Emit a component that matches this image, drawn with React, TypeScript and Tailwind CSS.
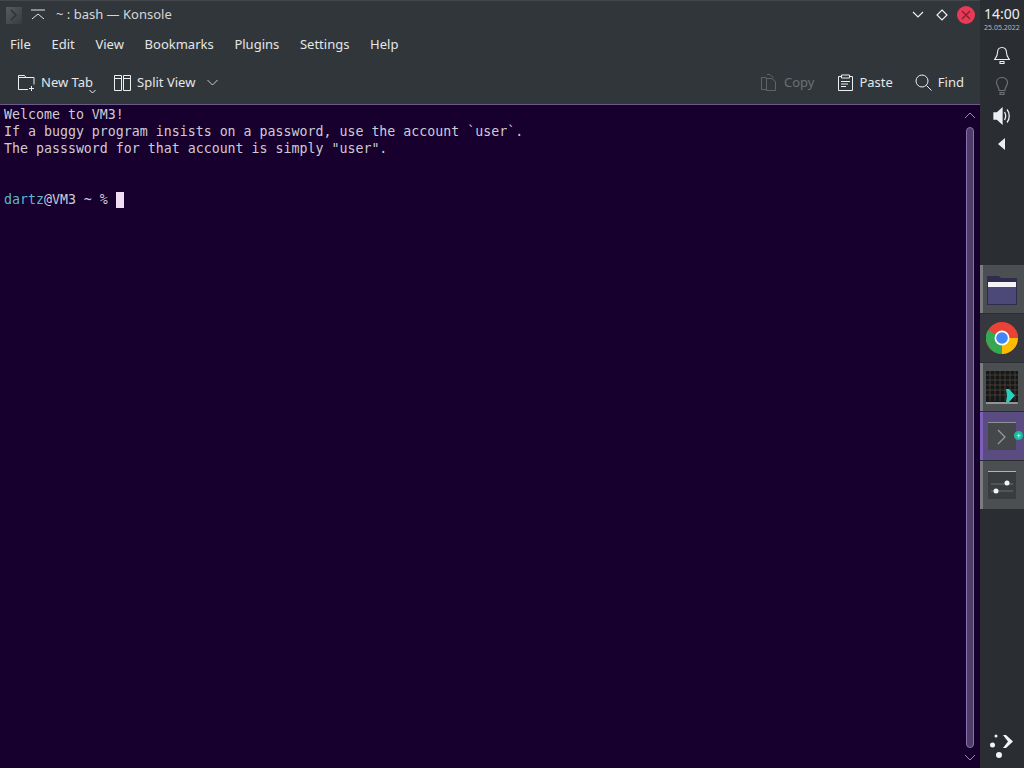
import React from "react";

const MENU = ["File", "Edit", "View", "Bookmarks", "Plugins", "Settings", "Help"];

const TERMINAL_LINES = [
  "Welcome to VM3!",
  "If a buggy program insists on a password, use the account `user`.",
  'The passsword for that account is simply "user".',
  "",
  "",
];

const TitleBar = () => (
  <div className="flex h-[29px] items-center border-t border-[#43474b] bg-[#31363b] text-[#d5d8da]">
    <div className="ml-[6px] flex h-[17px] w-[16px] items-center justify-center bg-gradient-to-br from-[#585b5e] to-[#383c40]">
      <svg width="10" height="12" viewBox="0 0 10 12" fill="none" stroke="#2f3235" strokeWidth="1.500">
        <path d="M2 1l5 5-5 5" />
      </svg>
    </div>
    <svg className="ml-[9px]" width="14" height="12" viewBox="0 0 14 12" fill="none" stroke="#e4e6e7" strokeWidth="1">
      <path d="M0 1h14M1 10l6-5 6 5" />
    </svg>
    <span className="ml-[11px] text-[13px]">~ : bash — Konsole</span>
    <div className="ml-auto flex items-center">
      <svg width="12" height="8" viewBox="0 0 12 8" fill="none" stroke="#eceff1" strokeWidth="1.200">
        <path d="M1 1l5 5 5-5" />
      </svg>
      <svg className="ml-[12px]" width="12" height="12" viewBox="0 0 12 12" fill="none" stroke="#eceff1" strokeWidth="1.200">
        <path d="M6 1l5 5-5 5-5-5z" />
      </svg>
      <div className="ml-[9px] mr-[5px] flex h-[18px] w-[18px] items-center justify-center rounded-full bg-[#e93a55]">
        <svg width="10" height="10" viewBox="0 0 10 10" fill="none" stroke="#7d1f30" strokeWidth="1.200">
          <path d="M1 1l8 8M9 1l-8 8" />
        </svg>
      </div>
    </div>
  </div>
);

const MenuBar = () => (
  <div className="flex h-[32px] items-center gap-[20.7px] bg-[#31363b] pl-[10px] text-[13px] text-[#e4e6e7]">
    {MENU.map((item) => (
      <span key={item}>{item}</span>
    ))}
  </div>
);

const ToolBar = () => (
  <div className="flex h-[43px] items-center bg-[#31363b] pl-[18px] pr-[16px] text-[13px] text-[#e4e6e7]">
    <svg width="17" height="17" viewBox="0 0 17 17" fill="none" stroke="#eceff1" strokeWidth="1">
      <path d="M10 15.500H.5V1.500h6l1.500 2h8v7M.5 3.500H8M13.500 12v5M11 14.500h5" />
    </svg>
    <span className="ml-[6px]">New Tab</span>
    <svg className="mt-[18px] ml-[-4px]" width="7" height="5" viewBox="0 0 7 5" fill="none" stroke="#eceff1" strokeWidth="1">
      <path d="M.5 1l3 3 3-3" />
    </svg>
    <svg className="ml-[18px]" width="17" height="16" viewBox="0 0 17 16" fill="none" stroke="#eceff1" strokeWidth="1">
      <path d="M.5.500h7v15h-7zM9.500.500h7v15h-7zM.5 3.500h7M9.500 3.500h7" />
    </svg>
    <span className="ml-[6px]">Split View</span>
    <svg className="ml-[12px]" width="11" height="7" viewBox="0 0 11 7" fill="none" stroke="#c8cbcd" strokeWidth="1">
      <path d="M.5 1l5 5 5-5" />
    </svg>
    <svg className="ml-auto" width="16" height="17" viewBox="0 0 16 17" fill="none" stroke="#5f6468" strokeWidth="1">
      <path d="M6 .5h3l3 3v1M.5 3.500H5v1M.5 3.500v12H5M5.500 4.500h5l4 3v9h-9z" />
    </svg>
    <span className="ml-[7px] text-[#6c7074]">Copy</span>
    <svg className="ml-[24px]" width="15" height="17" viewBox="0 0 15 17" fill="none" stroke="#eceff1" strokeWidth="1">
      <path d="M3.500 2.500H.5v14h14v-14h-3M3.500 1h8v3h-8zM3 7.500h9M3 10h7M3 12.500h5" />
    </svg>
    <span className="ml-[6px]">Paste</span>
    <svg className="ml-[22px]" width="17" height="17" viewBox="0 0 17 17" fill="none" stroke="#eceff1" strokeWidth="1">
      <circle cx="7" cy="7" r="6" />
      <path d="M11.500 11.500l5 5" />
    </svg>
    <span className="ml-[6px]">Find</span>
  </div>
);

const Terminal = () => (
  <div className="flex min-h-0 flex-1 border-t border-[#6d5a8c] bg-[#17002e]">
    <div className="flex-1 pl-[4px] pt-[1px] font-['DejaVu_Sans_Mono',monospace] text-[13.28px] leading-[17px] text-[#cfcbd4]">
      {TERMINAL_LINES.map((line, i) => (
        <div key={i} className="h-[17px] whitespace-pre">
          {line}
        </div>
      ))}
      <div className="flex h-[17px] items-center whitespace-pre">
        <span className="text-[#5cb8c8]">dartz</span>
        <span>@VM3 ~ % </span>
        <span className="h-[16px] w-[8px] bg-[#efdcf5]" />
      </div>
    </div>
    <div className="flex w-[20px] flex-col items-center">
      <svg className="mt-[6px]" width="12" height="8" viewBox="0 0 12 8" fill="none" stroke="#9a8ab0" strokeWidth="1">
        <path d="M1 7l5-5 5 5" />
      </svg>
      <div className="mt-[8px] mb-[6px] w-[8px] flex-1 rounded-full border border-[#8a6fb0] bg-[#4e3d66]" />
      <svg className="mb-[6px]" width="12" height="8" viewBox="0 0 12 8" fill="none" stroke="#9a8ab0" strokeWidth="1">
        <path d="M1 1l5 5 5-5" />
      </svg>
    </div>
  </div>
);

const TaskItem = ({ active, open, children }: { active?: boolean; open?: boolean; children: React.ReactNode }) => (
  <div
    className={
      active
        ? "flex h-[48px] items-center border-l-[3px] border-[#7c5fb8] bg-[#5a4b80] pl-[5px]"
        : open
          ? "flex h-[48px] items-center border-l-[3px] border-[#7a7d80] bg-[#4c4f52] pl-[3px]"
          : "flex h-[48px] items-center bg-[#36383d] pl-[6px]"
    }
  >
    {children}
  </div>
);

const Panel = () => (
  <div className="flex w-[44px] flex-col items-stretch bg-[#2a2e32] text-[#eceff1]">
    <div className="mt-[6px] text-center text-[14px] leading-[16px]">14:00</div>
    <div className="mt-[1px] text-center text-[7px] leading-[10px] text-[#b5b8ba]">25.05.2022</div>
    <div className="mt-[13px] flex flex-col items-center">
      <svg width="16" height="18" viewBox="0 0 16 18" fill="none" stroke="#eceff1" strokeWidth="1.100">
        <path d="M8 1.500c-3 0-4.500 2-4.500 5 0 4-1.500 5-3 7h15c-1.500-2-3-3-3-7 0-3-1.500-5-4.500-5zM6 15.500h4v2H6z" />
      </svg>
      <svg className="mt-[13px]" width="12" height="18" viewBox="0 0 12 18" fill="none" stroke="#6f7376" strokeWidth="1.100">
        <path d="M6 .5c-3 0-5.500 2-5.500 5 0 3 2.500 4 2.500 8h6c0-4 2.500-5 2.500-8 0-3-2.500-5-5.500-5zM4 15.500h4v2H4z" />
      </svg>
      <svg className="mt-[12px]" width="18" height="18" viewBox="0 0 18 18" fill="none" stroke="#eceff1" strokeWidth="1.300">
        <path d="M1 6h3l5-4.500v15L4 12H1z" fill="#eceff1" />
        <path d="M11.500 5c1.500 2.500 1.500 5.500 0 8M14 2.500c3 3.500 3 9.500 0 13" />
      </svg>
      <svg className="mt-[13px]" width="8" height="12" viewBox="0 0 8 12" fill="#eceff1">
        <path d="M7 0v12L0 6z" />
      </svg>
    </div>
    <div className="mt-[115px] flex flex-col gap-[1px]">
      <TaskItem open>
        <svg className="ml-[1px] mt-[2px]" width="30" height="29" viewBox="0 0 30 29">
          <path d="M0 0h12l2 2h16v27H0z" fill="#2f2c4e" />
          <rect x="1" y="6" width="28" height="5" fill="#f4f4f6" />
          <rect x="1" y="11" width="28" height="17" fill="#4c4878" />
        </svg>
      </TaskItem>
      <TaskItem>
        <svg width="32" height="32" viewBox="0 0 32 32">
          <circle cx="16" cy="16" r="16" fill="#ea4335" />
          <path d="M16 16L2.100 24A16 16 0 0 1 2.100 8z" fill="#34a853" />
          <path d="M16 16L2.100 24A16 16 0 0 0 16 32z" fill="#34a853" />
          <path d="M16 16L16 32A16 16 0 0 0 32 16z" fill="#fbbc04" />
          <path d="M16 16L32 16A16 16 0 0 0 29.900 8L16 8z" fill="#ea4335" />
          <circle cx="16" cy="16" r="7.500" fill="#fff" />
          <circle cx="16" cy="16" r="5.800" fill="#4285f4" />
        </svg>
      </TaskItem>
      <TaskItem open>
        <div className="h-[33px] w-[32px] bg-[#15181a]">
          <svg width="32" height="33" viewBox="0 0 32 33" fill="none">
            <path
              d="M0 4h32M0 9h32M0 14h32M0 19h32M0 24h32M4 0v30M9 0v30M14 0v30M19 0v30M24 0v30M29 0v30"
              stroke="#5a4a3a"
              strokeWidth="0.700"
            />
            <path d="M0 32h32" stroke="#e8e8e8" strokeWidth="1.200" />
            <path d="M20 18h3l6 6.500-6 6.500h-3l1-6.500z" fill="#22d3c0" />
          </svg>
        </div>
      </TaskItem>
      <TaskItem active>
        <div className="relative">
          <div className="flex h-[28px] w-[28px] items-center justify-center border-t border-[#8f9295] bg-[#45484b]">
            <svg width="10" height="16" viewBox="0 0 10 16" fill="none" stroke="#9a9da0" strokeWidth="1.200">
              <path d="M1 1l7 7-7 7" />
            </svg>
          </div>
          <div className="absolute right-[-7px] top-[9px] flex h-[9px] w-[9px] items-center justify-center rounded-full bg-[#1abc9c] text-[8px] leading-none text-white">
            +
          </div>
        </div>
      </TaskItem>
      <TaskItem open>
        <div className="ml-[2px] h-[28px] w-[28px] border-t border-[#b0b3b5] bg-[#3a3d40] pt-[7px]">
          <svg width="28" height="20" viewBox="0 0 28 20" fill="none">
            <path d="M3 12h22M3 5h22" stroke="#6a6d70" strokeWidth="1" />
            <circle cx="19" cy="4" r="2.500" fill="#f4f4f4" />
            <circle cx="8" cy="12" r="2.500" fill="#f4f4f4" />
          </svg>
        </div>
      </TaskItem>
    </div>
    <div className="mt-auto mb-[10px] flex justify-center">
      <svg width="26" height="26" viewBox="0 0 26 26" fill="#f4f4f6">
        <circle cx="7" cy="4" r="1.500" />
        <circle cx="3.500" cy="13" r="2.500" />
        <circle cx="10" cy="23" r="3" />
        <path d="M14 3h3l7 6.500-7 6.500h-3l5-6.500z" />
      </svg>
    </div>
  </div>
);

export default function App() {
  return (
    <div className="flex h-[768px] w-[1024px] overflow-hidden font-['Noto_Sans',sans-serif]">
      <div className="flex w-[980px] flex-col">
        <TitleBar />
        <MenuBar />
        <ToolBar />
        <Terminal />
      </div>
      <Panel />
    </div>
  );
}
